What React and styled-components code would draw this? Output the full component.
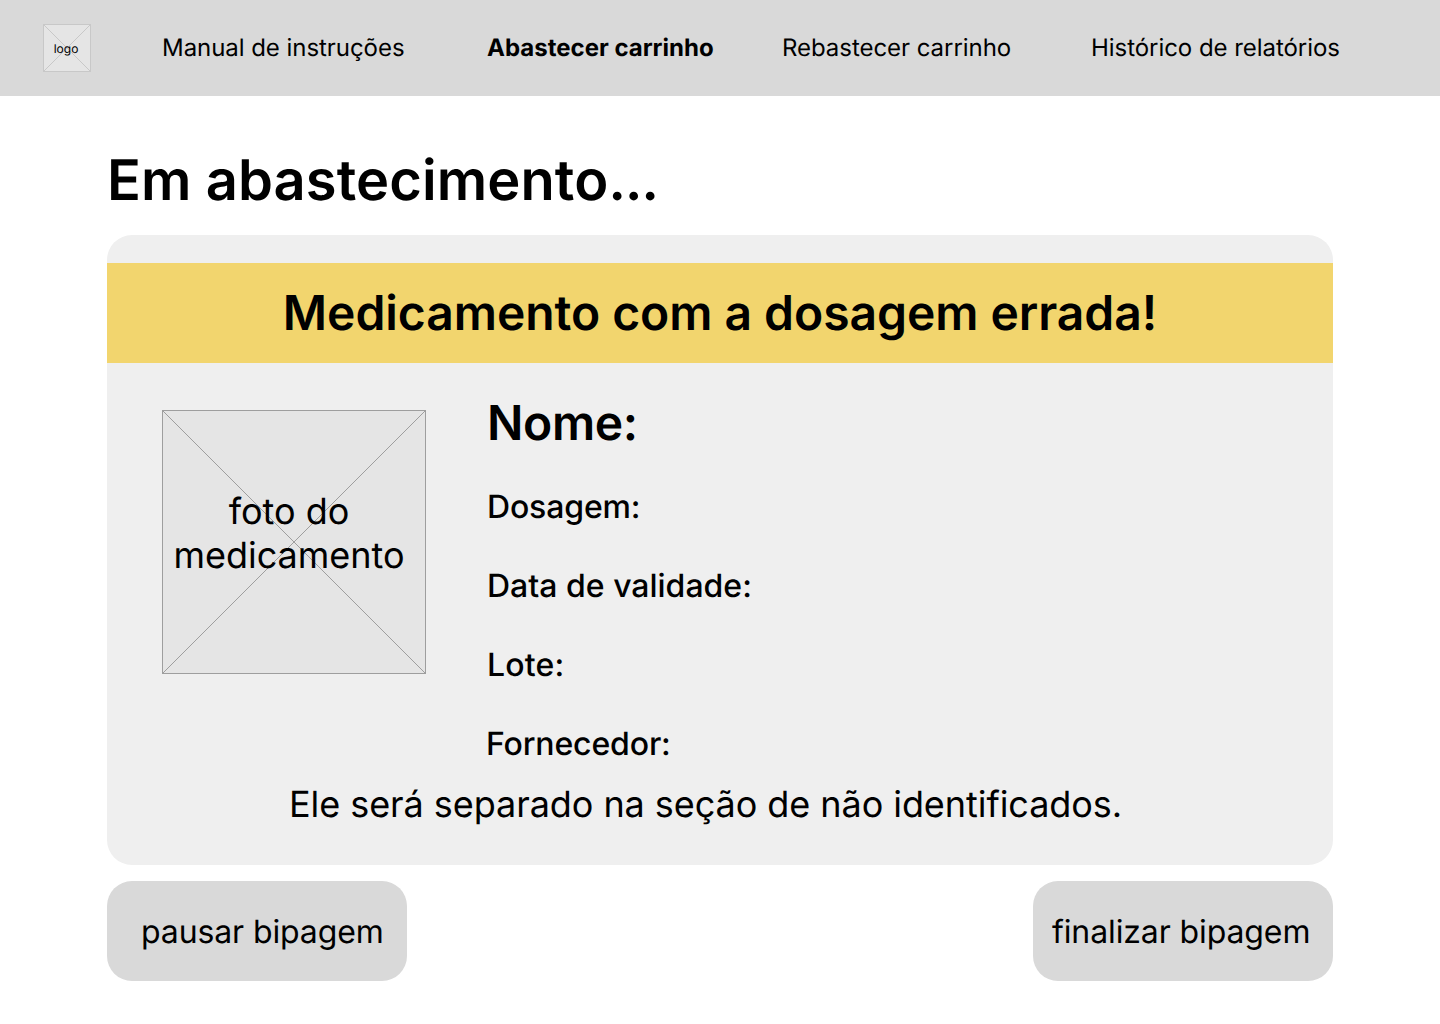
import React from "react";
import styled, { createGlobalStyle } from "styled-components";

const Global = createGlobalStyle`
  * { box-sizing: border-box; }
  body { margin: 0; background: #fff; color: #000; font-family: Inter, "Liberation Sans", sans-serif; text-rendering: geometricPrecision; }
`;
const Page = styled.div`
  width: 1440px;
  height: 1024px;
  overflow: hidden;
`;
const Header = styled.header`
  display: flex;
  align-items: center;
  height: 96px;
  padding-left: 43px;
  background: #d9d9d9;
`;
const Nav = styled.nav`
  display: flex;
  margin: 0 0 2px 71px;
`;
const NavLink = styled.a`
  width: ${(p) => p.$width}px;
  font-size: 24px;
  line-height: 29px;
  font-weight: ${(p) => (p.$active ? 700 : 400)};
  letter-spacing: ${(p) => (p.$active ? 0 : -0.05)}px;
  white-space: nowrap;
`;
const Frame = styled.div`
  position: relative;
  flex: none;
  width: ${(p) => p.$size}px;
  height: ${(p) => p.$size}px;
`;
const Cross = styled.svg`
  display: block;
  width: 100%;
  height: 100%;
`;
const Caption = styled.div`
  position: absolute;
  inset: 0;
  display: flex;
  align-items: center;
  justify-content: center;
  text-align: center;
  font-size: ${(p) => p.$font}px;
  line-height: ${(p) => p.$line}px;
  padding: ${(p) => p.$pad};
`;
const Main = styled.main`
  padding: 50px 107px 0;
`;
const Title = styled.h1`
  margin: 0;
  font-size: 56px;
  line-height: 68px;
  font-weight: 600;
  letter-spacing: 0.1px;
`;
const Ellipsis = styled.span`
  letter-spacing: -1.4px;
`;
const Card = styled.section`
  height: 630px;
  margin-top: 21px;
  padding-top: 28px;
  border-radius: 25px;
  background: #efefef;
`;
const Banner = styled.div`
  height: 100px;
  background: #f2d56e;
  text-align: center;
  font-size: 48px;
  line-height: 100px;
  font-weight: 600;
  letter-spacing: -0.05px;
`;
const Details = styled.div`
  display: flex;
  height: 419px;
  padding: 47px 0 0 55px;
`;
const Fields = styled.div`
  margin: -16px 0 0 61px;
`;
const Name = styled.h2`
  margin: 0 0 35px;
  font-size: 48px;
  line-height: 58px;
  font-weight: 600;
  letter-spacing: -0.35px;
`;
const Field = styled.div`
  height: 79px;
  margin-left: ${(p) => p.$shift || 0}px;
  font-size: 32px;
  line-height: 39px;
  font-weight: 500;
  letter-spacing: ${(p) => p.$tracking || 0}px;
`;
const Note = styled.p`
  margin: 0 0 0 182px;
  font-size: 36px;
  line-height: 44px;
  letter-spacing: -0.06px;
`;
const Actions = styled.div`
  display: flex;
  justify-content: space-between;
  margin-top: 16px;
`;
const Button = styled.button`
  width: 300px;
  height: 100px;
  padding: 0 0 0 ${(p) => p.$indent}px;
  border: 0;
  border-radius: 25px;
  background: #d9d9d9;
  color: #000;
  font: 400 32px/39px Inter, sans-serif;
  letter-spacing: -0.11px;
  text-rendering: inherit;
  text-align: left;
  white-space: nowrap;
`;

function Placeholder({ size, stroke, font, line, pad, children }) {
  const end = size - 0.5;
  return (
    <Frame $size={size}>
      <Cross viewBox={`0 0 ${size} ${size}`} fill="none" stroke={stroke}>
        <rect x="0.5" y="0.5" width={size - 1} height={size - 1} fill="#e5e5e5" />
        <path d={`M.5 .5L${end} ${end}M${end} .5L.5 ${end}`} />
      </Cross>
      <Caption $font={font} $line={line} $pad={pad}>{children}</Caption>
    </Frame>
  );
}

export default function App() {
  return (
    <Page>
      <Global />
      <Header>
        <Placeholder size={48} stroke="#c8c8c8" font={12} line={15} pad="0 2px 0 0">logo</Placeholder>
        <Nav>
          <NavLink $width={325}>Manual de instruções</NavLink>
          <NavLink $width={295} $active>Abastecer carrinho</NavLink>
          <NavLink $width={309}>Rebastecer carrinho</NavLink>
          <NavLink $width={260}>Histórico de relatórios</NavLink>
        </Nav>
      </Header>
      <Main>
        <Title>Em abastecimento<Ellipsis>...</Ellipsis></Title>
        <Card>
          <Banner>Medicamento com a dosagem errada!</Banner>
          <Details>
            <Placeholder size={264} stroke="#9e9e9e" font={36} line={44} pad="0 10px 18px 0">
              foto do<br />medicamento
            </Placeholder>
            <Fields>
              <Name>Nome:</Name>
              <Field $tracking={-0.15}>Dosagem:</Field>
              <Field>Data de validade:</Field>
              <Field $tracking={0.15}>Lote:</Field>
              <Field $shift={-1} $tracking={-0.15}>Fornecedor:</Field>
            </Fields>
          </Details>
          <Note>Ele será separado na seção de não identificados.</Note>
        </Card>
        <Actions>
          <Button $indent={34}>pausar bipagem</Button>
          <Button $indent={19}>finalizar bipagem</Button>
        </Actions>
      </Main>
    </Page>
  );
}
